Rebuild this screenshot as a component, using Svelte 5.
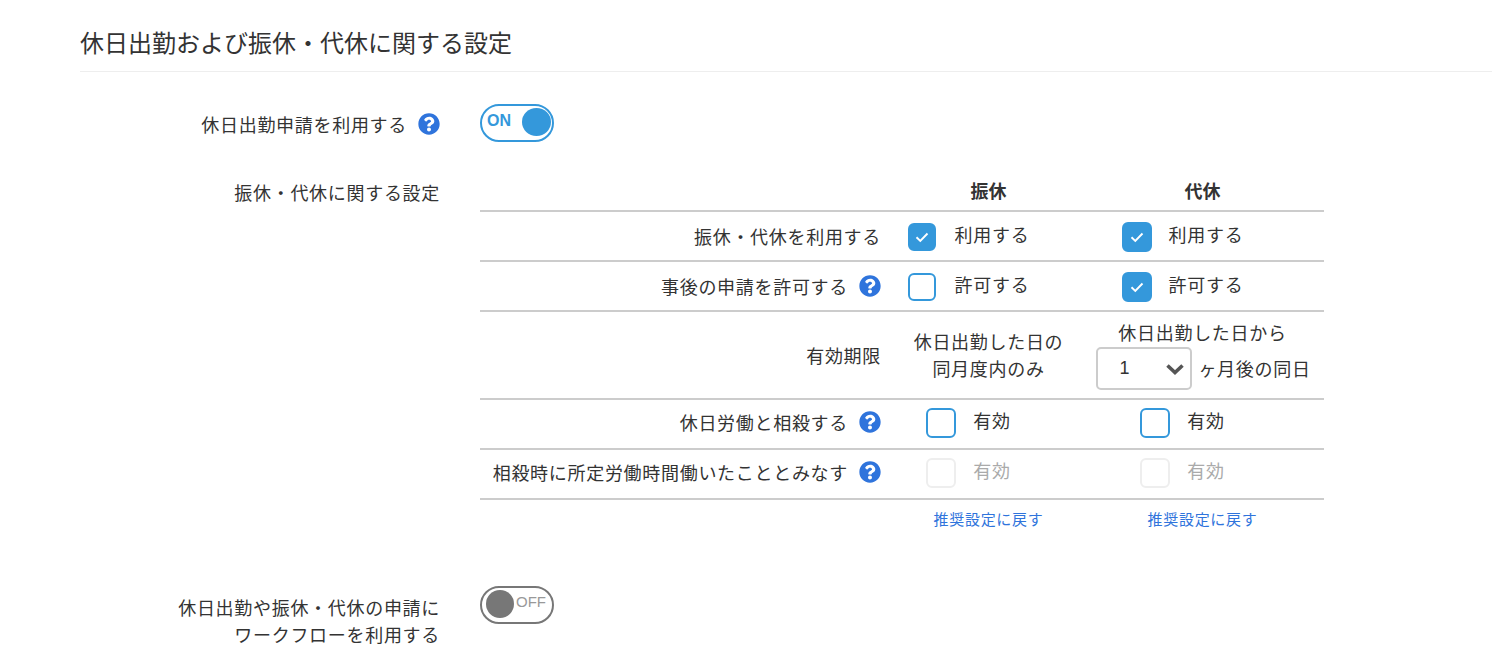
<script>
  const helpPath =
    'M504 256c0 136.997-111.043 248-248 248S8 392.997 8 256C8 119.083 119.043 8 256 8s248 111.083 248 248zM262.655 90c-54.497 0-89.255 22.957-116.549 63.758-3.536 5.286-2.353 12.415 2.715 16.258l34.699 26.31c5.205 3.947 12.621 3.008 16.665-2.122 17.864-22.658 30.113-35.797 57.303-35.797 20.429 0 45.698 13.148 45.698 32.958 0 14.976-12.363 22.667-32.534 33.976C247.128 238.528 216 254.941 216 296v4c0 6.627 5.373 12 12 12h56c6.627 0 12-5.373 12-12v-1.333c0-28.462 83.186-29.647 83.186-106.667 0-58.002-60.165-102-116.531-102zM256 338c-25.365 0-46 20.635-46 46 0 25.364 20.635 46 46 46s46-20.636 46-46c0-25.365-20.635-46-46-46z';

  const rows = [
    { label: '振休・代休を利用する', text: '利用する', help: false, a: true, b: true, narrow: true },
    { label: '事後の申請を許可する', text: '許可する', help: true, a: false, b: true, narrow: true },
    { expiry: true, label: '有効期限' },
    { label: '休日労働と相殺する', text: '有効', help: true, a: false, b: false, compact: true },
    { label: '相殺時に所定労働時間働いたこととみなす', text: '有効', help: true, a: false, b: false, disabled: true, compact: true }
  ];
</script>

{#snippet help()}
  <svg class="help" viewBox="0 0 512 512" aria-hidden="true"><path d={helpPath} /></svg>
{/snippet}

{#snippet check(on, text, disabled, narrow)}
  <div class="check" class:disabled>
    <span class="box" class:on class:narrow>
      {#if on}
        <svg viewBox="0 0 16 16" width="16" height="16" aria-hidden="true">
          <path d="M2.5 8.3l3.8 3.6 7.2-7.4" fill="none" stroke="#fff" stroke-width="1.9" />
        </svg>
      {/if}
    </span>
    <span>{text}</span>
  </div>
{/snippet}

<div class="page">
  <h2>休日出勤および振休・代休に関する設定</h2>

  <div class="setting first">
    <div class="label">休日出勤申請を利用する {@render help()}</div>
    <div class="toggle on"><span class="state">ON</span><span class="knob"></span></div>
  </div>

  <div class="setting">
    <div class="label table-label">振休・代休に関する設定</div>
    <div class="table">
      <div class="row head">
        <div></div>
        <div class="cell">振休</div>
        <div class="cell">代休</div>
      </div>
      {#each rows as row}
        <div class="row" class:tall={row.expiry} class:compact={row.compact}>
          <div class="row-label">
            {row.label}
            {#if row.help}{@render help()}{/if}
          </div>
          {#if row.expiry}
            <div class="cell stack">休日出勤した日の<br />同月度内のみ</div>
            <div class="cell expiry">
              <div>休日出勤した日から</div>
              <div class="after">
                <div class="select">
                  <span>1</span>
                  <svg viewBox="0 0 20 14" width="20" height="14" aria-hidden="true">
                    <path d="M2.5 3.5L10 10.5l7.5-7" fill="none" stroke="#555" stroke-width="3.6" />
                  </svg>
                </div>
                <span>ヶ月後の同日</span>
              </div>
            </div>
          {:else}
            <div class="cell">{@render check(row.a, row.text, row.disabled, row.narrow)}</div>
            <div class="cell">{@render check(row.b, row.text, row.disabled, false)}</div>
          {/if}
        </div>
      {/each}
      <div class="row links">
        <div></div>
        <div class="cell"><a href="#a">推奨設定に戻す</a></div>
        <div class="cell"><a href="#b">推奨設定に戻す</a></div>
      </div>
    </div>
  </div>

  <div class="setting last">
    <div class="label two-line">休日出勤や振休・代休の申請に<br />ワークフローを利用する</div>
    <div class="toggle off"><span class="knob"></span><span class="state">OFF</span></div>
  </div>
</div>

<style>
  :global(body) {
    margin: 0;
    background: #fff;
  }

  .page {
    height: 664px;
    overflow: hidden;
    padding-left: 80px;
    box-sizing: border-box;
    color: #333;
    font-family: "Noto Sans CJK JP", sans-serif;
    font-size: 18px;
    letter-spacing: 0.7px;
  }

  h2 {
    margin: 0;
    height: 72px;
    box-sizing: border-box;
    padding-top: 24px;
    border-bottom: 1px solid #eee;
    font-size: 24px;
    line-height: 36px;
    font-weight: 400;
    letter-spacing: 0;
  }

  .setting {
    display: flex;
    gap: 40px;
  }

  .first {
    margin-top: 32px;
  }

  .last {
    margin-top: 46px;
  }

  .label {
    width: 360px;
    flex: none;
    display: flex;
    justify-content: flex-end;
    align-items: center;
    gap: 11px;
    line-height: 27px;
    white-space: nowrap;
    height: 40px;
  }

  .table-label {
    height: 27px;
    margin-top: 35px;
  }

  .two-line {
    display: block;
    text-align: right;
    height: auto;
    padding-top: 8px;
  }

  .help {
    width: 22px;
    height: 22px;
    flex: none;
    fill: #2f74dc;
  }

  .toggle {
    width: 74px;
    height: 38px;
    box-sizing: border-box;
    border: 2px solid #3498db;
    border-radius: 19px;
    display: flex;
    justify-content: space-between;
    padding: 2px 1px 0 5px;
    font-size: 16px;
    line-height: 24px;
    letter-spacing: 0;
    font-family: "Liberation Sans", sans-serif;
  }

  .toggle.on .state {
    margin-top: 1px;
    font-weight: 700;
    color: #3498db;
  }

  .toggle.off {
    border-color: #777;
    justify-content: flex-start;
    gap: 2px;
    padding-left: 4px;
    color: #999;
    font-size: 15px;
  }

  .knob {
    width: 29px;
    height: 28px;
    border-radius: 50%;
    background: #3498db;
    flex: none;
  }

  .off .knob {
    width: 28px;
    background: #777;
  }

  .table {
    width: 844px;
    margin-top: 27px;
  }

  .row {
    display: grid;
    grid-template-columns: 401px 215px 213px;
    height: 50px;
    border-bottom: 2px solid #ccc;
    box-sizing: border-box;
    align-items: center;
  }

  .row.head {
    height: 41px;
    font-weight: 700;
    padding-bottom: 2px;
    letter-spacing: 0;
  }

  .row.tall {
    height: 88px;
  }

  .row.compact {
    padding-bottom: 4px;
  }

  .row.links {
    height: 40px;
    border-bottom: 0;
    font-size: 15px;
    padding-bottom: 3px;
  }

  .row-label {
    display: flex;
    justify-content: flex-end;
    align-items: center;
    gap: 11px;
    white-space: nowrap;
    line-height: 27px;
  }

  .cell {
    display: flex;
    justify-content: center;
    white-space: nowrap;
  }

  .stack {
    display: block;
    text-align: center;
    line-height: 27px;
    margin-top: -1px;
  }

  .expiry {
    flex-direction: column;
    align-items: center;
    line-height: 27px;
    margin-top: -1px;
  }

  .after {
    display: flex;
    align-items: center;
    gap: 6px;
    padding-left: 2px;
    margin-top: 1px;
  }

  .select {
    width: 96px;
    height: 43px;
    box-sizing: border-box;
    border: 2px solid #ccc;
    border-radius: 5px;
    display: flex;
    justify-content: space-between;
    align-items: center;
    padding: 0 5px 0 21px;
    font-family: "Liberation Sans", sans-serif;
  }

  .check {
    display: flex;
    align-items: center;
    gap: 17px;
    margin-right: 40px;
    margin-top: -3px;
    line-height: 27px;
  }

  .box {
    width: 30px;
    height: 30px;
    margin-top: 4px;
    box-sizing: border-box;
    border: 2px solid #3498db;
    border-radius: 6px;
    display: flex;
    align-items: center;
    justify-content: center;
    background: #fff;
  }

  .box.narrow {
    width: 28px;
    height: 28px;
    margin-right: 2px;
  }

  .box.on {
    background: #3498db;
  }

  .disabled {
    color: #aaa;
  }

  .disabled .box {
    border-color: #eee;
  }

  a {
    color: #2f74dc;
    text-decoration: none;
  }
</style>
